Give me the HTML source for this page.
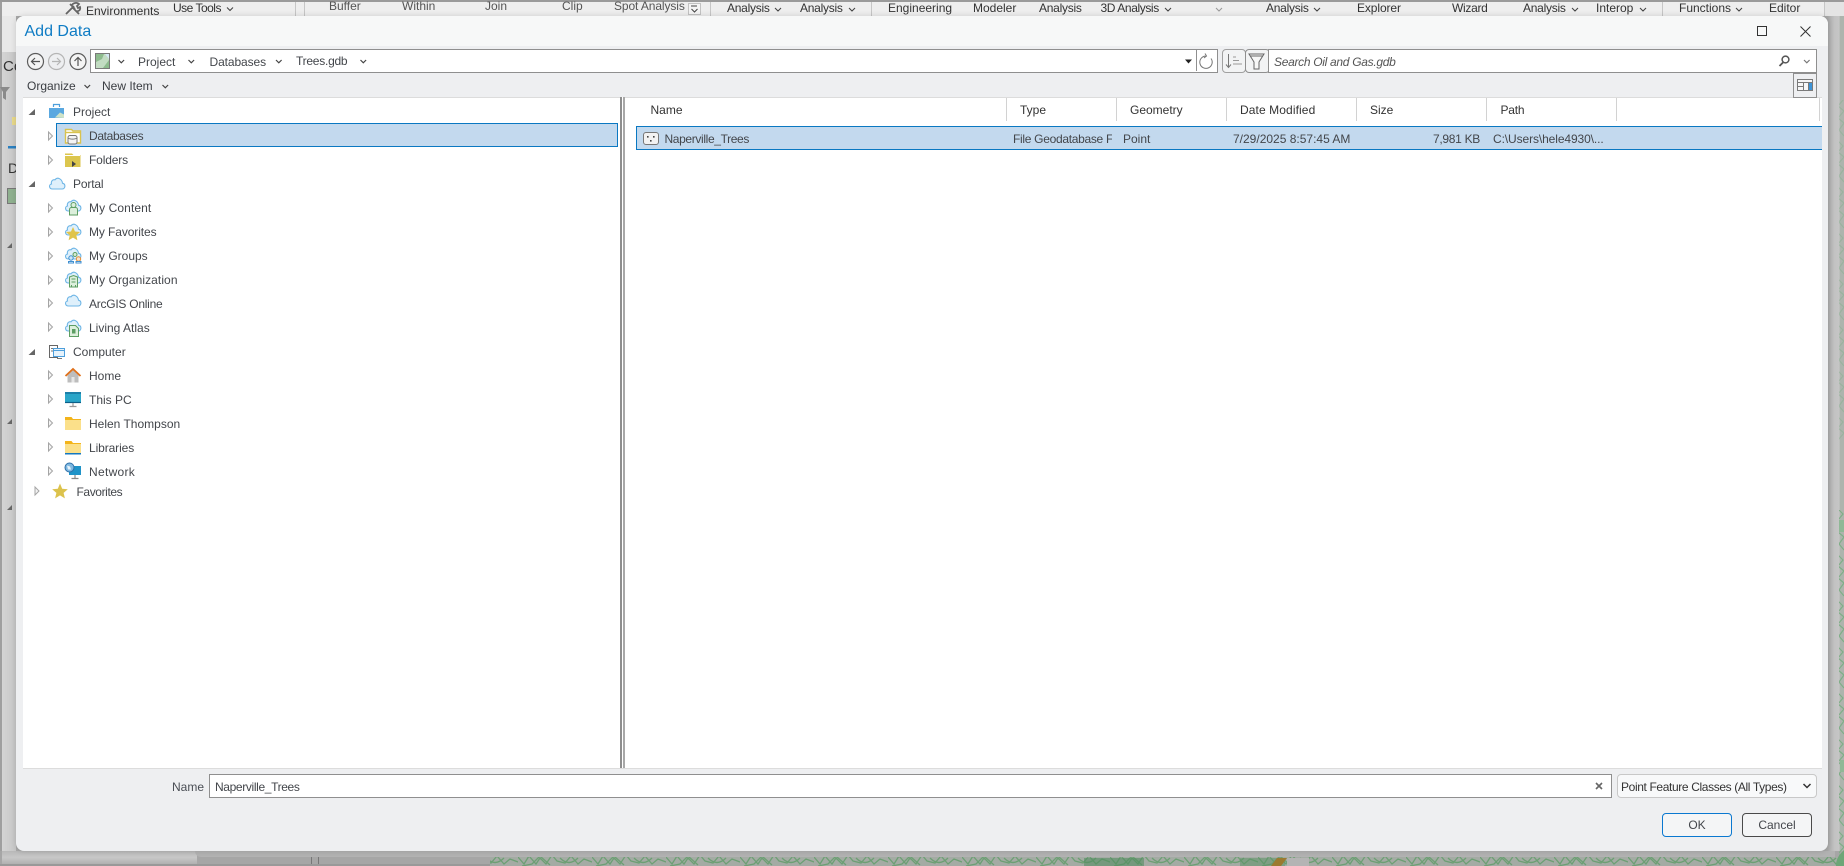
<!DOCTYPE html>
<html><head><meta charset="utf-8"><title>Add Data</title>
<style>
html,body{margin:0;padding:0;width:1844px;height:866px;overflow:hidden;background:#a8a8a8}
body{position:relative;font-family:"Liberation Sans",sans-serif;font-size:12px;color:#43464b}
.a{position:absolute}
.t{position:absolute;white-space:nowrap;line-height:16px;height:16px}
.r{color:#333}
svg{position:absolute;left:0;top:0;overflow:visible}
</style></head><body>
<!-- backdrop -->
<div class="a" style="left:0;top:0;width:1844px;height:2px;background:#9a9a9a"></div>
<div class="a" style="left:0;top:2px;width:1824px;height:14px;background:#eeeeee"></div>
<div class="a" style="left:1824px;top:2px;width:20px;height:14px;background:#e4e4e4"></div>
<div class="a" style="left:0;top:2px;width:2px;height:864px;background:#9f9f9f"></div>
<div class="a" style="left:2px;top:16px;width:14px;height:36px;background:#e8e8e8"></div>
<div class="a" style="left:2px;top:52px;width:14px;height:812px;background:linear-gradient(90deg,#d4d4d4,#c6c6c6)"></div>
<div class="a" style="left:1828px;top:16px;width:16px;height:850px;background:linear-gradient(90deg,#a9a9a9,#c2c2c2 40%,#c6c6c6 70%,#adb4ad 75%)"></div>
<div class="a" style="left:0;top:851px;width:1844px;height:15px;background:#a6a6a6"></div>
<div class="a" style="left:2px;top:851px;width:195px;height:13px;background:linear-gradient(180deg,#b8b8b8,#c8c8c8 50%,#b0b0b0)"></div>
<div class="a" style="left:195px;top:851px;width:1640px;height:6px;background:#b2b2b2;border-radius:0 0 0 6px"></div>
<div class="a" style="left:0;top:864px;width:500px;height:2px;background:#999"></div>
<div class="a" style="left:311px;top:857px;width:1px;height:7px;background:#777"></div>
<div class="a" style="left:318px;top:857px;width:1px;height:7px;background:#777"></div>

<svg width="1844" height="866" style="z-index:0">
<defs><pattern id="g" width="74" height="14" patternUnits="userSpaceOnUse">
<path d="M0 3l6 7 5-8 7 8 4-6 6 6 6-9 5 6 8 2 6-7 7 8 6-5 8 3M4 12l10-2 8-8 10 9M42 4c6 6 12 6 18 0" fill="none" stroke="#6d9f74" stroke-width="1.3"/></pattern>
<pattern id="v" width="9" height="46" patternUnits="userSpaceOnUse">
<path d="M1 2l6 6-5 6 6 5-6 7 6 5-5 7 5 6" fill="none" stroke="#7fae87" stroke-width="1.2"/></pattern></defs>
<rect x="490" y="857" width="1354" height="9" fill="#a4aba4"/>
<rect x="490" y="857" width="1354" height="9" fill="url(#g)"/>
<rect x="1084" y="858" width="60" height="8" fill="#4f8a5c" opacity=".55"/>
<rect x="1240" y="858" width="45" height="8" fill="#5a9163" opacity=".5"/>
<path d="M1271 866l6-8h10l-6 8z" fill="#9b7a30"/>
<rect x="1287" y="858" width="22" height="8" fill="#b4b4b4"/>
<rect x="1839" y="510" width="5" height="350" fill="url(#v)"/>
<rect x="1839" y="100" width="5" height="340" fill="url(#v)" opacity=".4"/>
<path d="M1836 864c1-7 4-10 8-14v16h-8z" fill="#6da677"/>
<path d="M1839 520h5v12h-5zM1840 760h4v12h-4z" fill="#8fb896"/>
<!-- ribbon seps -->
<path d="M295.500 2v14M304.500 2v14M710.500 2v14M871.500 2v14M1662.500 2v14M1824.500 2v14" stroke="#c6c6c6"/>
<rect x="688.500" y="3.500" width="12" height="11" fill="#f4f4f4" stroke="#c2c2c2"/>
<path d="M691 6h6M691.500 9l3 3 3-3" fill="none" stroke="#444"/>
<!-- ribbon chevrons -->
<g fill="none" stroke="#444" stroke-width="1.1">
<path d="M227 7.500l3 3 3-3M775 8l3 3 3-3M849 8l3 3 3-3M1165 8l3 3 3-3"/>
<path d="M1314 8l3 3 3-3M1572 8l3 3 3-3M1640 8l3 3 3-3M1736 8l3 3 3-3"/>
</g>
<path d="M1216 8l3 3 3-3" fill="none" stroke="#999" stroke-width="1.1"/>
<!-- hammer icon -->
<path d="M66 14l8-8M70 4l5 5M79 14l-7-7M72 5c1-2 5-3 7-1l-2 2 1 2 2-1c1 3-2 5-4 4" fill="none" stroke="#666" stroke-width="1.8"/>
<!-- left side bits -->
<path d="M0 87h10l-4 5v8l-3-2v-6z" fill="#8a8a8a"/>
<rect x="12" y="117" width="4" height="8" fill="#e8d98a"/>
<rect x="8" y="146" width="8" height="2.500" fill="#2a7fc0"/>
<rect x="7.500" y="188.500" width="9" height="15" fill="#8fb08f" stroke="#777"/>
<path d="M7 248l5-5v5zM7 424l5-5v5zM7 510l5-5v5z" fill="#666"/>
</svg>
<div class="t" style="left:3px;top:58px;font-size:15px;height:18px;line-height:18px;color:#333">Co</div>
<div class="t" style="left:8px;top:160px;font-size:14px;color:#333">D</div>

<!-- ribbon text -->
<div class="t r" style="left:86px;top:3px">Environments</div>
<div class="t r" style="left:173px;top:0;letter-spacing:-.5px">Use Tools</div>
<div class="t r" style="left:329px;top:-2px;color:#555">Buffer</div>
<div class="t r" style="left:402px;top:-2px;color:#555">Within</div>
<div class="t r" style="left:485px;top:-2px;color:#555">Join</div>
<div class="t r" style="left:562px;top:-2px;color:#555">Clip</div>
<div class="t r" style="left:614px;top:-2px;color:#555;letter-spacing:-.1px">Spot Analysis</div>
<div class="t r" style="left:727px;top:0;letter-spacing:-.25px">Analysis</div>
<div class="t r" style="left:800px;top:0;letter-spacing:-.25px">Analysis</div>
<div class="t r" style="left:888px;top:0">Engineering</div>
<div class="t r" style="left:973px;top:0">Modeler</div>
<div class="t r" style="left:1039px;top:0;letter-spacing:-.25px">Analysis</div>
<div class="t r" style="left:1100.500px;top:0;letter-spacing:-.4px">3D Analysis</div>
<div class="t r" style="left:1266px;top:0;letter-spacing:-.25px">Analysis</div>
<div class="t r" style="left:1357px;top:0;letter-spacing:-.1px">Explorer</div>
<div class="t r" style="left:1452px;top:0;letter-spacing:-.3px">Wizard</div>
<div class="t r" style="left:1523px;top:0;letter-spacing:-.25px">Analysis</div>
<div class="t r" style="left:1596px;top:0">Interop</div>
<div class="t r" style="left:1679px;top:0">Functions</div>
<div class="t r" style="left:1769px;top:0">Editor</div>

<!-- dialog -->
<div class="a" style="left:16px;top:16px;width:1812px;height:835px;background:#eeeff1;border-radius:8px;box-shadow:0 0 6px rgba(0,0,0,.15);overflow:hidden">
<div class="a" style="left:0;top:0;width:1812px;height:30px;background:#f7f8f8"></div>
</div>
<div class="t" style="left:24.500px;top:22px;font-size:16px;height:20px;line-height:20px;color:#0f7cc4">Add Data</div>

<!-- address bar -->
<div class="a" style="left:90px;top:49px;width:1126px;height:22px;background:#fff;border:1px solid #8f8f8f"></div>
<div class="a" style="left:1196px;top:49px;width:20px;height:22px;border-left:1px solid #8f8f8f"></div>
<div class="a" style="left:1222px;top:49px;width:22px;height:22px;border:1px solid #a0a0a0;border-radius:4px;background:#f2f3f4"></div>
<div class="a" style="left:1245px;top:49px;width:23px;height:22px;border:1px solid #8f8f8f;border-radius:4px;background:#f2f3f4"></div>
<div class="a" style="left:1268px;top:49px;width:547px;height:22px;background:#fff;border:1px solid #8f8f8f"></div>
<div class="t" style="left:138px;top:54px">Project</div>
<div class="t" style="left:209.500px;top:54px;letter-spacing:-.1px">Databases</div>
<div class="t" style="left:296px;top:53px;letter-spacing:-.25px">Trees.gdb</div>
<div class="t" style="left:1274px;top:54px;font-style:italic;color:#555;letter-spacing:-.3px">Search Oil and Gas.gdb</div>
<div class="t" style="left:27px;top:78px;color:#3a3d42">Organize</div>
<div class="t" style="left:102px;top:78px;color:#3a3d42">New Item</div>

<!-- panes -->
<div class="a" style="left:23px;top:97px;width:597px;height:671px;background:#fff;border-top:1px solid #dcdcdc;box-sizing:border-box"></div>
<div class="a" style="left:620px;top:97px;width:5px;height:671px;background:#fff;box-sizing:border-box;border-left:2px solid #8e8e8e;border-right:2px solid #a8a8a8"></div>
<div class="a" style="left:625px;top:97px;width:1197px;height:671px;background:#fff;border-top:1px solid #dcdcdc;box-sizing:border-box"></div>
<div class="a" style="left:23px;top:768px;width:1799px;height:1px;background:#dcdcdc"></div>
<div class="a" style="left:1793px;top:73px;width:22px;height:23px;background:#eeeff1;border:1px solid #8f8f8f"></div>

<!-- tree selection -->
<div class="a" style="left:56px;top:123px;width:562px;height:24px;box-sizing:border-box;background:#c3d9ee;border:1px solid #0a78c2"></div>

<!-- tree text -->
<div class="t" style="left:73px;top:103.500px">Project</div>
<div class="t" style="left:89px;top:127.500px;letter-spacing:-.35px">Databases</div>
<div class="t" style="left:89px;top:151.500px;letter-spacing:-.15px">Folders</div>
<div class="t" style="left:73px;top:175.500px;letter-spacing:-.15px">Portal</div>
<div class="t" style="left:89px;top:199.500px;letter-spacing:.1px">My Content</div>
<div class="t" style="left:89px;top:223.500px;letter-spacing:-.1px">My Favorites</div>
<div class="t" style="left:89px;top:247.500px">My Groups</div>
<div class="t" style="left:89px;top:271.500px;letter-spacing:.08px">My Organization</div>
<div class="t" style="left:89px;top:295.500px;letter-spacing:-.25px">ArcGIS Online</div>
<div class="t" style="left:89px;top:319.500px">Living Atlas</div>
<div class="t" style="left:73px;top:343.500px">Computer</div>
<div class="t" style="left:89px;top:367.500px">Home</div>
<div class="t" style="left:89px;top:391.500px">This PC</div>
<div class="t" style="left:89px;top:415.500px">Helen Thompson</div>
<div class="t" style="left:89px;top:439.500px;letter-spacing:-.1px">Libraries</div>
<div class="t" style="left:89px;top:463.500px;letter-spacing:.3px">Network</div>
<div class="t" style="left:76.500px;top:483.500px;letter-spacing:-.4px">Favorites</div>

<!-- list headers -->
<div class="t" style="left:650.500px;top:102px;color:#333">Name</div>
<div class="t" style="left:1020px;top:102px;color:#333">Type</div>
<div class="t" style="left:1130px;top:102px;color:#333">Geometry</div>
<div class="t" style="left:1240px;top:102px;color:#333;letter-spacing:.1px">Date Modified</div>
<div class="t" style="left:1370px;top:102px;color:#333">Size</div>
<div class="t" style="left:1500.500px;top:102px;color:#333;letter-spacing:-.2px">Path</div>

<!-- selected row -->
<div class="a" style="left:636px;top:126px;width:1186px;height:24px;box-sizing:border-box;background:#c3d9ee;border:solid #0a78c2;border-width:1px 0 1px 1px"></div>
<div class="t" style="left:664.500px;top:130.500px;letter-spacing:-.36px">Naperville_Trees</div>
<div class="t" style="left:1013px;top:130.500px;width:99px;overflow:hidden;letter-spacing:-.3px">File Geodatabase Feature Class</div>
<div class="t" style="left:1123px;top:130.500px">Point</div>
<div class="t" style="left:1233px;top:130.500px">7/29/2025 8:57:45 AM</div>
<div class="t" style="left:1400px;width:80px;text-align:right;top:130.500px;letter-spacing:-.3px">7,981 KB</div>
<div class="t" style="left:1493px;top:130.500px;letter-spacing:-.1px">C:\Users\hele4930\...</div>

<!-- bottom -->
<div class="t" style="left:172px;top:778.500px;color:#4a4e55">Name</div>
<div class="a" style="left:209px;top:774px;width:1403px;height:24px;box-sizing:border-box;background:#fff;border:1px solid #8f8f8f"></div>
<div class="t" style="left:215px;top:778.500px;letter-spacing:-.36px">Naperville_Trees</div>
<div class="a" style="left:1617px;top:774px;width:200px;height:24px;box-sizing:border-box;background:#f8f9fa;border:1px solid #c8c8c8;border-radius:4px"></div>
<div class="t" style="left:1621px;top:778.500px;color:#333;letter-spacing:-.37px">Point Feature Classes (All Types)</div>
<div class="a" style="left:1662px;top:813px;width:70px;height:24px;box-sizing:border-box;background:#f4f5f6;border:1px solid #0a78d0;border-radius:4px;text-align:center;line-height:22px">OK</div>
<div class="a" style="left:1742px;top:813px;width:70px;height:24px;box-sizing:border-box;background:#f4f5f6;border:1px solid #4a4a4a;border-radius:4px;text-align:center;line-height:22px">Cancel</div>

<!-- icons overlay -->
<svg width="1844" height="866">
<defs>
<path id="cl" d="M3.500 13h9.500c3.500 0 4-5 .5-5.800C13 3 8.500.5 6 3.800 3.500 3 1.800 5.500 2.500 8-.5 8.500 0 13 3.500 13z"/>
<g id="cloud"><use href="#cl" fill="#dff0fb" stroke="#6fb6e6" stroke-width="1.1"/></g>
<path id="ar" d="M0 0l4 4-4 4z" fill="#f4f4f4" stroke="#a5a5a5"/>
</defs>

<!-- window controls -->
<rect x="1757.500" y="26.500" width="9" height="9" fill="none" stroke="#333"/>
<path d="M1800.500 26.500l10 10M1810.500 26.500l-10 10" stroke="#333" fill="none"/>

<!-- nav -->
<g fill="none" stroke-width="1.2">
<circle cx="35.500" cy="61.500" r="8" stroke="#5c5c5c" fill="#f4f4f4"/>
<path d="M40 61.500h-8M35 58l-3.500 3.500L35 65" stroke="#555"/>
<circle cx="56.500" cy="61.500" r="8" stroke="#b5b5b5"/>
<path d="M52 61.500h8M57 58l3.500 3.500L57 65" stroke="#b5b5b5"/>
<circle cx="78" cy="61.500" r="8" stroke="#5c5c5c" fill="#f4f4f4"/>
<path d="M78 66v-8M74.500 61l3.500-3.500 3.500 3.500" stroke="#555"/>
</g>
<rect x="95.500" y="53.500" width="14" height="15" fill="#c2dcc2" stroke="#7a7a7a"/>
<path d="M96 54h8l-2 5-6 3zM103 68l6-8v8z" fill="#8dbb8d"/><path d="M105 54h4v5z" fill="#d4e8f4"/>
<!-- chevrons -->
<g fill="none" stroke="#444" stroke-width="1.2">
<path d="M118.500 60l2.800 2.800 2.800-2.800M188.500 60l2.800 2.800 2.800-2.800M276 60l2.800 2.800 2.800-2.800M360.500 60l2.800 2.800 2.800-2.800"/>
<path d="M84.500 85l2.800 2.800 2.800-2.800M162.500 85l2.800 2.800 2.800-2.800"/>
<path d="M1804 60l2.800 2.800 2.800-2.800" stroke="#777"/>
<path d="M1803.500 784l3.500 3.500 3.500-3.500" stroke="#333" stroke-width="1.500"/>
</g>
<path d="M1185 59.500h7l-3.500 4z" fill="#222"/>
<path d="M1211 58.500a6.200 6.200 0 1 1-5.500-2.500M1205 53.500l1.500 2.500-2.500 2" fill="none" stroke="#777"/>
<!-- sort -->
<path d="M1228.500 54v13M1226 64.500l2.500 3 2.500-3" fill="none" stroke="#777"/>
<path d="M1233 57h3M1233 60.500h6M1233 64h9" stroke="#999"/>
<!-- filter -->
<path d="M1249 54h15l-5 8v7h-5v-7z" fill="#f7f7f7" stroke="#666"/>
<path d="M1250 56h13" stroke="#666"/>
<!-- search -->
<circle cx="1785.500" cy="59.500" r="3.400" fill="none" stroke="#555" stroke-width="1.500"/>
<path d="M1783 62.500l-3.500 3.500" stroke="#555" stroke-width="1.800"/>
<!-- columns icon -->
<rect x="1797.500" y="79.500" width="15" height="11" fill="#f7f7f7" stroke="#7a7a7a"/>
<path d="M1797.500 82.500h15M1803.500 82.500v8M1808.500 82.500v8M1798 86.500h5" stroke="#7a7a7a" fill="none"/>
<rect x="1809" y="83" width="3" height="7" fill="#3d93d6"/>
<!-- list separators -->
<path d="M1006.500 98v23M1116.500 98v23M1226.500 98v23M1356.500 98v23M1486.500 98v23M1616.500 98v23M1819.500 98v23" stroke="#d2d2d2"/>
<!-- point fc icon -->
<rect x="643.500" y="132.500" width="15" height="12" rx="2.500" fill="#f2f2f2" stroke="#777"/>
<path d="M647 136h1.600v1.600H647zM653 136h1.600v1.600H653zM650 140h1.600v1.600H650z" fill="#444"/>
<!-- clear -->
<path d="M1596 783l6 6M1602 783l-6 6" stroke="#666" stroke-width="1.600"/>

<!-- expanders filled -->
<path d="M28.500 115l6.500-6v6zM28.500 187l6.500-6v6zM28.500 355l6.500-6v6z" fill="#666"/>
<!-- hollow -->
<use href="#ar" x="48.500" y="132"/><use href="#ar" x="48.500" y="156"/>
<use href="#ar" x="48.500" y="204"/><use href="#ar" x="48.500" y="228"/><use href="#ar" x="48.500" y="252"/>
<use href="#ar" x="48.500" y="276"/><use href="#ar" x="48.500" y="299"/><use href="#ar" x="48.500" y="323"/>
<use href="#ar" x="48.500" y="371"/><use href="#ar" x="48.500" y="395"/><use href="#ar" x="48.500" y="419"/>
<use href="#ar" x="48.500" y="443"/><use href="#ar" x="48.500" y="467"/>
<use href="#ar" x="35" y="487"/>

<!-- Project -->
<path d="M49 107h15v11H49z" fill="#5aa8e0"/><path d="M53.500 107v-2.500h6V107" fill="none" stroke="#4d9fdc" stroke-width="1.200"/>
<path d="M49 107.500h15" stroke="#fff"/><path d="M55 117.500l5-5 4 2v3.500z" fill="#cfe3c8"/>
<!-- Databases -->
<path d="M65.500 131v-1.500h6l1.500 1.500h7.500v12h-15z" fill="#fff" stroke="#d9c34f" stroke-width="1.400"/>
<path d="M65 132.500h15" stroke="#d9c34f" stroke-width="1.400"/>
<rect x="68" y="135.500" width="9" height="8.500" rx="2" fill="#f4f4f4" stroke="#777"/><path d="M68 138c2 1.500 7 1.500 9 0" fill="none" stroke="#777"/>
<!-- Folders -->
<path d="M65 153.500h7l1.500 1.500h7v12H65z" fill="#dcc64e"/><path d="M65 155.500h15" stroke="#fff"/>
<path d="M72 161l4 3-4 3z" fill="#444"/>
<!-- Portal -->
<use href="#cloud" x="49" y="176"/>
<!-- My Content -->
<use href="#cloud" x="65" y="198"/>
<circle cx="73.500" cy="205" r="2.500" fill="#dcefdc" stroke="#5d9e63"/><path d="M69.500 215v-5.500a2 2 0 0 1 2-2h4a2 2 0 0 1 2 2v5.500z" fill="#dcefdc" stroke="#5d9e63"/>
<!-- My Favorites -->
<use href="#cloud" x="65" y="222"/>
<path d="M73 227l2 4.500 5 .5-3.700 3.300 1.100 4.900-4.400-2.600-4.400 2.600 1.100-4.900-3.700-3.300 5-.5z" fill="#e0c44a"/>
<!-- My Groups -->
<use href="#cloud" x="65" y="246"/>
<circle cx="71" cy="258" r="2.200" fill="#cfe6f7" stroke="#3f8fd0"/><circle cx="75" cy="254.500" r="2" fill="#d7ebd7" stroke="#5d9e63"/><circle cx="78.500" cy="259" r="2.200" fill="#fbe2c8" stroke="#e28a30"/>
<path d="M68.500 263v-1.500h5v1.500zM76 263v-1.500h5v1.500z" fill="none" stroke="#3f8fd0"/>
<!-- My Org -->
<use href="#cloud" x="65" y="270"/>
<path d="M69.500 287v-10l4-1.500 4 1.500v10z" fill="#dcefdc" stroke="#5d9e63"/><path d="M71.500 279h4M71.500 282h4M71.500 285v2M75.500 285v2" stroke="#5d9e63"/>
<!-- ArcGIS -->
<use href="#cloud" x="65" y="293"/>
<!-- Living Atlas -->
<use href="#cloud" x="65" y="318"/>
<path d="M69.500 325.500h6l3 3v8h-9z" fill="#dcefdc" stroke="#5d9e63"/><rect x="72" y="329" width="3.500" height="4.500" fill="#5d9e63"/>
<!-- Computer -->
<path d="M49.500 345.500h8v12h-8z" fill="#fff" stroke="#666"/><path d="M51 348.500h5M51 351h5" stroke="#777"/>
<rect x="53.500" y="348.500" width="11" height="8" fill="#e6f2fb" stroke="#4d9fdc"/><path d="M54 350.500h10" stroke="#4d9fdc"/><path d="M57 358.500h5" stroke="#777"/>
<!-- Home -->
<path d="M67.500 375v7.500h11V375l-5.500-5z" fill="#bdbdbd"/><rect x="71.500" y="377" width="3" height="5.500" fill="#e6e6e6"/>
<path d="M65.500 376l7.500-7 7.500 7" fill="none" stroke="#e0701a" stroke-width="1.800"/>
<!-- This PC -->
<rect x="65" y="392" width="16" height="11" fill="#2aa5c8"/><path d="M65 392h16v2H65z" fill="#1d7fa8"/><path d="M65 402.500h16" stroke="#0d5f88" stroke-width="1.200"/>
<path d="M73 403v3M69.500 406.500h7" stroke="#999" stroke-width="1.200"/>
<!-- Helen -->
<path d="M65 417h6.500l1.500 2h8v11H65z" fill="#f3b41b"/><rect x="65" y="420" width="16" height="10" fill="#fbe08a"/>
<!-- Libraries -->
<path d="M65 441h6.500l1.500 2h8v10H65z" fill="#f3b41b"/><rect x="65" y="444" width="16" height="9" fill="#fbe08a"/><rect x="65" y="453" width="16" height="1.500" fill="#1478c0"/>
<!-- Network -->
<rect x="69" y="466" width="12" height="9" fill="#1f93c8"/><path d="M75 475v3M71.500 478.500h7" stroke="#888" stroke-width="1.200"/>
<circle cx="69.500" cy="467.500" r="4.500" fill="#7fb8e0" stroke="#2d6fa8"/><path d="M67 465.500l3 1 1 3-3 0z" fill="#e6f2fb"/>
<!-- Favorites star -->
<path d="M60 483.500l2.200 5.200 5.600.5-4.200 3.700 1.300 5.500-4.900-3-4.900 3 1.300-5.500-4.200-3.700 5.600-.5z" fill="#dcc24c"/>
</svg>
</body></html>
